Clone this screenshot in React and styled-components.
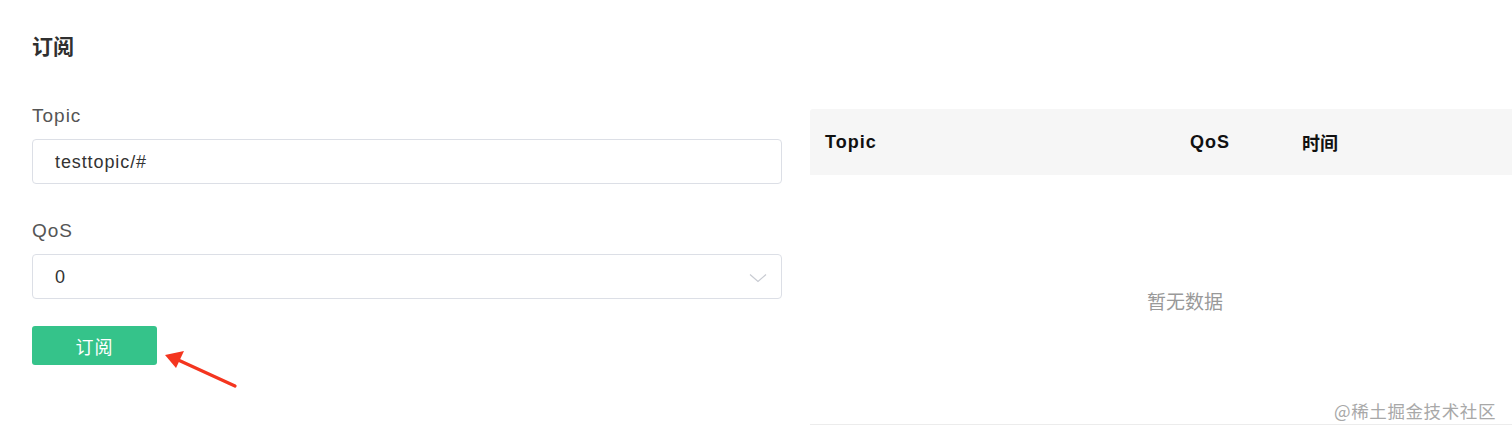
import React from "react"
import styled, {createGlobalStyle} from "styled-components"

const GlobalStyle = createGlobalStyle`
  html, body {
    margin: 0;
    padding: 0;
    background: #fff;
    overflow: hidden;
  }
  body {
    font-family: "Liberation Sans", "Noto Sans CJK SC", sans-serif;
  }
`

const Page = styled.div`
  position: relative;
  width: 1512px;
  height: 435px;
  padding: 31px 0 0 32px;
  box-sizing: border-box;
  overflow: hidden;
`

const Title = styled.h2`
  margin: 0;
  font-family: "Noto Sans CJK SC", sans-serif;
  font-size: 21px;
  line-height: 28px;
  font-weight: 700;
  color: #303030;
`

const Row = styled.div`
  display: flex;
  gap: 28px;
  margin-top: 45px;
`

const Form = styled.div`
  width: 750px;
  flex-shrink: 0;
  display: flex;
  flex-direction: column;
`

const Label = styled.label`
  font-size: 19px;
  line-height: 24px;
  letter-spacing: 1px;
  color: #555;
  margin-top: ${({first}) => first ? "0" : "35px"};
  margin-bottom: 11px;
`

const Field = styled.div`
  position: relative;
  height: 45px;
  box-sizing: border-box;
  border: 1px solid #dcdfe6;
  border-radius: 4px;
  padding: 1px 22px 0;
  display: flex;
  align-items: center;
  justify-content: space-between;
  font-size: 18px;
  letter-spacing: 0.9px;
  color: #333;
`

const Chevron = styled.svg`
  width: 18px;
  height: 10px;
  margin-right: -8px;
  margin-top: 2px;
`

const Button = styled.button`
  margin-top: 27px;
  width: 125px;
  height: 39px;
  border: none;
  border-radius: 3px;
  background: #35c38a;
  color: #fff;
  font-family: "Noto Sans CJK SC", sans-serif;
  font-size: 18px;
  letter-spacing: 1px;
  cursor: pointer;
`

const Table = styled.div`
  width: 750px;
  flex-shrink: 0;
  margin-top: 5px;
  display: flex;
  flex-direction: column;
`

const HeadRow = styled.div`
  display: grid;
  grid-template-columns: 365px 112px 1fr;
  height: 66px;
  align-items: center;
  background: #f6f6f6;
  border-radius: 3px 3px 0 0;
`

const HeadCell = styled.div`
  padding-left: 15px;
  font-family: ${({cjk}) => cjk ? `"Noto Sans CJK SC", sans-serif` : `"Liberation Sans", sans-serif`};
  font-size: 18px;
  letter-spacing: ${({cjk}) => cjk ? "0" : "1px"};
  font-weight: 700;
  color: #111;
`

const Empty = styled.div`
  height: 250px;
  display: flex;
  align-items: center;
  justify-content: center;
  border-bottom: 1px solid #ececec;
  font-family: "Noto Sans CJK SC", sans-serif;
  font-size: 19px;
  color: #999;
  padding-top: 2px;
  box-sizing: border-box;
`

const Arrow = styled.svg`
  position: absolute;
  left: 160px;
  top: 346px;
  width: 82px;
  height: 46px;
`

const Watermark = styled.div`
  position: absolute;
  right: 16px;
  bottom: 12px;
  font-family: "Noto Sans CJK SC", sans-serif;
  font-size: 17.5px;
  color: #a8a8a8;
  letter-spacing: 0.6px;
`

const App = () => {
  return (
    <Page>
      <GlobalStyle />
      <Title>订阅</Title>
      <Row>
        <Form>
          <Label first>Topic</Label>
          <Field>testtopic/#</Field>
          <Label>QoS</Label>
          <Field>
            0
            <Chevron viewBox="0 0 18 10">
              <path d="M1 1.5 L9 8.5 L17 1.5" fill="none" stroke="#c8cbd2" strokeWidth="1.2" />
            </Chevron>
          </Field>
          <div>
            <Button>订阅</Button>
          </div>
        </Form>
        <Table>
          <HeadRow>
            <HeadCell>Topic</HeadCell>
            <HeadCell>QoS</HeadCell>
            <HeadCell cjk>时间</HeadCell>
          </HeadRow>
          <Empty>暂无数据</Empty>
        </Table>
      </Row>
      <Arrow viewBox="0 0 82 46">
        <line x1="75" y1="40" x2="16" y2="13" stroke="#f4351f" strokeWidth="3.2" strokeLinecap="round" />
        <polygon points="5,9 24,5 16,22" fill="#f4351f" />
      </Arrow>
      <Watermark>@稀土掘金技术社区</Watermark>
    </Page>
  )
}

export default App
